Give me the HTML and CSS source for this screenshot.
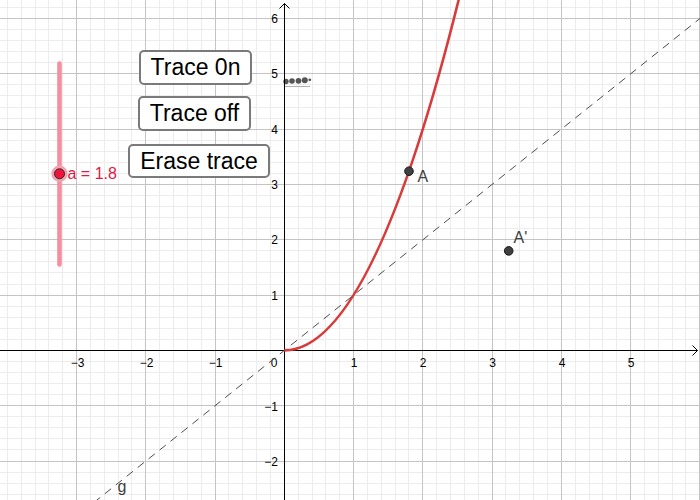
FILE: index.html
```html
<!DOCTYPE html>
<html>
<head>
<meta charset="utf-8">
<link rel="stylesheet" href="styles.css">
</head>
<body>
<div class="stage">
  <svg class="graph" width="700" height="500" viewBox="0 0 700 500" xmlns="http://www.w3.org/2000/svg">
    <path class="minor" d="M7.5 0V500M21.5 0V500M35.5 0V500M48.5 0V500M62.5 0V500M90.5 0V500M104.5 0V500M118.5 0V500M131.5 0V500M159.5 0V500M173.5 0V500M187.5 0V500M201.5 0V500M228.5 0V500M242.5 0V500M256.5 0V500M270.5 0V500M298.5 0V500M312.5 0V500M325.5 0V500M339.5 0V500M367.5 0V500M381.5 0V500M395.5 0V500M408.5 0V500M436.5 0V500M450.5 0V500M464.5 0V500M478.5 0V500M505.5 0V500M519.5 0V500M533.5 0V500M547.5 0V500M575.5 0V500M589.5 0V500M602.5 0V500M616.5 0V500M644.5 0V500M658.5 0V500M672.5 0V500M685.5 0V500
    M0 7.5H700M0 29.5H700M0 40.5H700M0 51.5H700M0 62.5H700M0 84.5H700M0 95.5H700M0 107.5H700M0 118.5H700M0 140.5H700M0 151.5H700M0 162.5H700M0 173.5H700M0 195.5H700M0 206.5H700M0 217.5H700M0 228.5H700M0 250.5H700M0 261.5H700M0 272.5H700M0 284.5H700M0 306.5H700M0 317.5H700M0 328.5H700M0 339.5H700M0 361.5H700M0 372.5H700M0 383.5H700M0 394.5H700M0 416.5H700M0 427.5H700M0 438.5H700M0 449.5H700M0 472.5H700M0 483.5H700M0 494.5H700"/>
    <path class="major" d="M76.5 0V500M145.5 0V500M215.5 0V500M353.5 0V500M422.5 0V500M492.5 0V500M561.5 0V500M630.5 0V500M699.5 0V500
    M0 18.5H700M0 73.5H700M0 129.5H700M0 184.5H700M0 239.5H700M0 295.5H700M0 405.5H700M0 461.5H700"/>

    <!-- trace artefact -->
    <path class="trace-line" d="M285 86.5H310"/>
    <circle class="trace-dot" cx="286" cy="81.5" r="2.7"/>
    <circle class="trace-dot" cx="292" cy="81" r="2.8"/>
    <circle class="trace-dot" cx="298.5" cy="80.8" r="2.9"/>
    <circle class="trace-dot" cx="304.8" cy="80.3" r="3"/>
    <circle class="trace-dot" cx="309.8" cy="79.8" r="1.4"/>

    <!-- axes -->
    <path class="axis" d="M0 350.5H697.5M284.5 3.5V500"/>
    <polyline class="axis" points="692.5,345.5 697.5,350.5 692.5,355.5"/>
    <polyline class="axis" points="279.5,8.5 284.5,3.5 289.5,8.5"/>

    <!-- axis labels -->
    <g class="lbl">
      <text x="77.5" y="366.5" text-anchor="middle">−3</text>
      <text x="146.5" y="366.5" text-anchor="middle">−2</text>
      <text x="215.5" y="366.5" text-anchor="middle">−1</text>
      <text x="274" y="366.5" text-anchor="middle">0</text>
      <text x="354" y="366.5" text-anchor="middle">1</text>
      <text x="423" y="366.5" text-anchor="middle">2</text>
      <text x="492.5" y="366.5" text-anchor="middle">3</text>
      <text x="562" y="366.5" text-anchor="middle">4</text>
      <text x="631" y="366.5" text-anchor="middle">5</text>
      <text x="278" y="23" text-anchor="end">6</text>
      <text x="278" y="78.3" text-anchor="end">5</text>
      <text x="278" y="133.6" text-anchor="end">4</text>
      <text x="278" y="188.9" text-anchor="end">3</text>
      <text x="278" y="244.2" text-anchor="end">2</text>
      <text x="278" y="299.5" text-anchor="end">1</text>
      <text x="278" y="410.5" text-anchor="end">−1</text>
      <text x="278" y="465.8" text-anchor="end">−2</text>
    </g>

    <!-- line g: y = x -->
    <path class="dashed" d="M93.9 502.5L703.3 15.8"/>
    <text class="name" x="117.5" y="491.5">g</text>

    <!-- curve -->
    <path class="curve" d="M284.3 350.4Q374.3 350.4 464.35 -23.4"/>

    <!-- points -->
    <circle class="pt" cx="409" cy="171.2" r="4.3"/>
    <text class="name" x="417.5" y="182">A</text>
    <circle class="pt" cx="508.7" cy="250.9" r="4.3"/>
    <text class="name" x="513.5" y="243">A'</text>

    <!-- slider -->
    <path class="slider-track" d="M59.5 63.5V264.5"/>
    <circle class="slider-halo" cx="59.5" cy="173.8" r="8.2"/>
    <circle class="slider-knob" cx="59.5" cy="173.8" r="5"/>
    <text class="slider-lbl" x="67.5" y="179">a = 1.8</text>
  </svg>

  <div class="controls">
    <div class="btn btn-on">Trace 0n</div>
    <div class="btn btn-off">Trace off</div>
    <div class="btn btn-erase">Erase trace</div>
  </div>
</div>
</body>
</html>
```
FILE: styles.css
```css
html, body {
  margin: 0;
  padding: 0;
  background: #ffffff;
}

.stage {
  position: relative;
  width: 700px;
  height: 500px;
  overflow: hidden;
  background: #ffffff;
}

.graph {
  display: block;
}

.minor {
  stroke: #ececec;
  stroke-width: 1;
  fill: none;
}

.major {
  stroke: #c4c4c4;
  stroke-width: 1;
  fill: none;
}

.axis {
  stroke: #000000;
  stroke-width: 1;
  fill: none;
}

.lbl text {
  font-family: "Liberation Sans", Arial, sans-serif;
  font-size: 12px;
  fill: #000000;
}

.dashed {
  stroke: #4d4d4d;
  stroke-width: 1;
  stroke-dasharray: 8 6;
  fill: none;
}

.curve {
  stroke: #d93b3b;
  stroke-width: 2.6;
  fill: none;
}

.pt {
  fill: #404040;
  stroke: #1a1a1a;
  stroke-width: 1;
}

.name {
  font-family: "Liberation Sans", Arial, sans-serif;
  font-size: 16px;
  fill: #404040;
}

.trace-line {
  stroke: #b0b0b0;
  stroke-width: 1;
}

.trace-dot {
  fill: #555555;
}

.slider-track {
  stroke: #f58fa0;
  stroke-width: 4.6;
  stroke-linecap: round;
  fill: none;
}

.slider-halo {
  fill: #f0a3b0;
}

.slider-knob {
  fill: #f0133c;
  stroke: #2a2a2a;
  stroke-width: 1;
}

.slider-lbl {
  font-family: "Liberation Sans", Arial, sans-serif;
  font-size: 16px;
  fill: #e3173f;
}

.controls {
  position: absolute;
  left: 128px;
  top: 50px;
  display: flex;
  flex-direction: column;
  align-items: flex-start;
}

.btn {
  box-sizing: border-box;
  height: 35px;
  border: 2px solid #7a7a7a;
  border-radius: 5px;
  background: #ffffff;
  font-family: "Liberation Sans", Arial, sans-serif;
  font-size: 23px;
  color: #000000;
  display: flex;
  align-items: center;
  justify-content: center;
  white-space: nowrap;
}

.btn-on {
  width: 113px;
  margin-left: 11px;
}

.btn-off {
  width: 113px;
  margin-left: 10px;
  margin-top: 11px;
}

.btn-erase {
  width: 142px;
  height: 34px;
  margin-top: 13px;
}
```
